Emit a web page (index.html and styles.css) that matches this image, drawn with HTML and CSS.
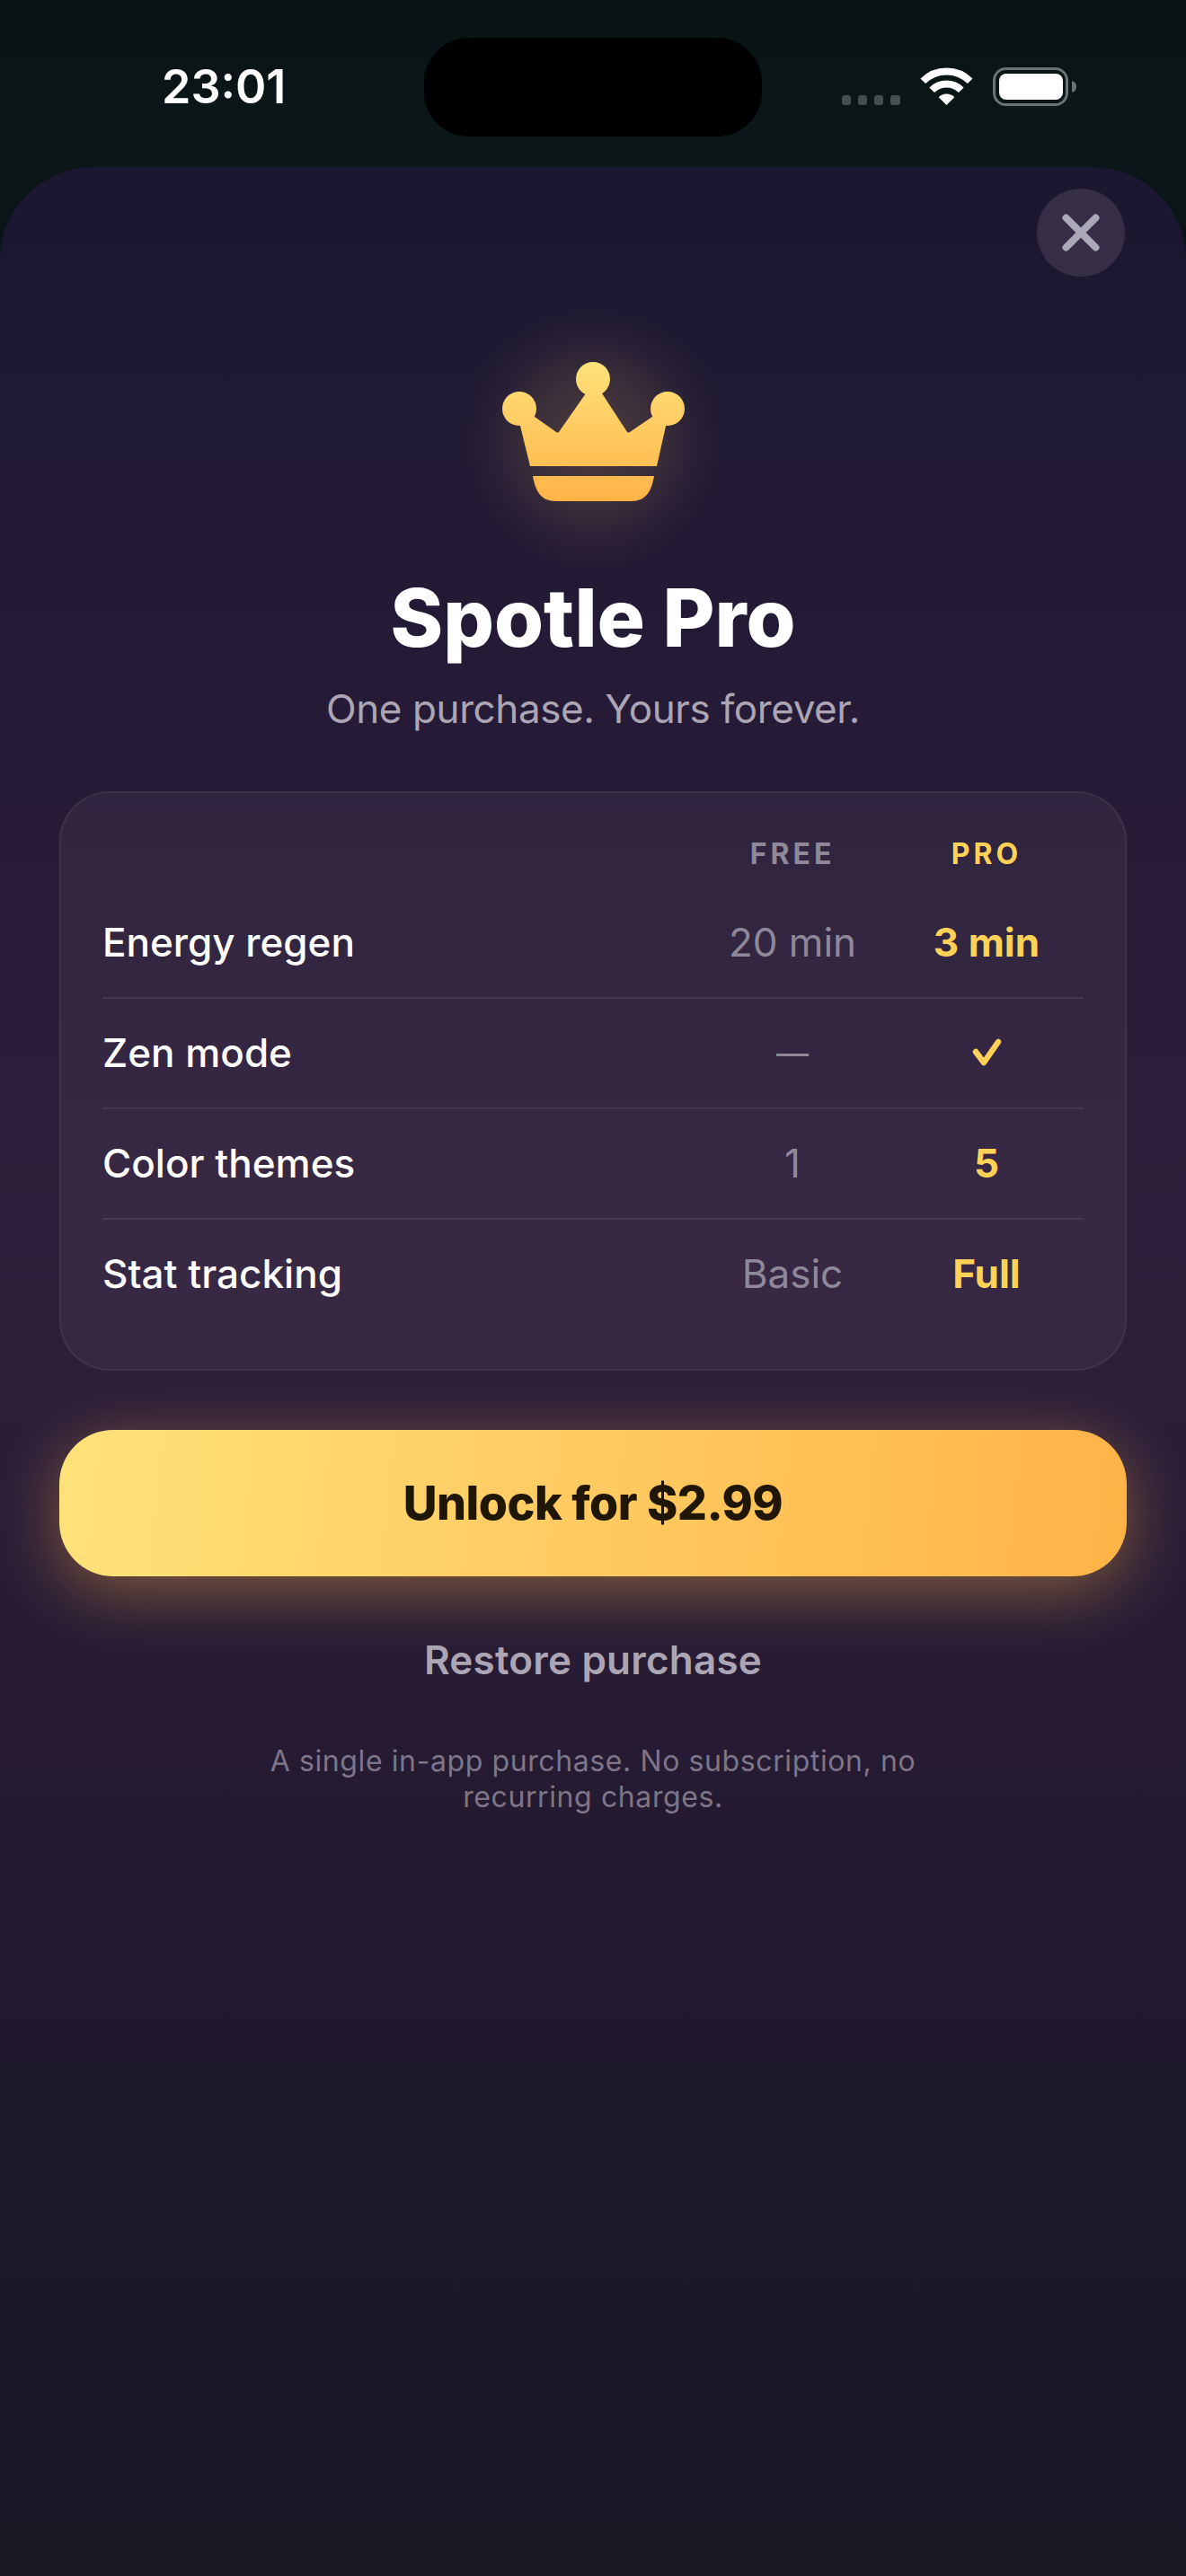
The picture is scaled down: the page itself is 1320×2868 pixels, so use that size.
FILE: index.html
```html
<!DOCTYPE html>
<html lang="en">
<head>
  <meta charset="UTF-8" />
  <meta name="viewport" content="width=device-width, initial-scale=1.0" />
  <title>Spotle Pro</title>
  <link rel="stylesheet" href="styles.css">
</head>
<body>

  <div class="statusbar">
    <div class="time">23:01</div>
    <div class="island"></div>
    <svg class="status-icons" viewBox="930 72 270 50">
      <!-- signal dots -->
      <rect x="937" y="106" width="10" height="11" rx="3" fill="#454d50" />
      <rect x="955" y="106" width="10" height="11" rx="3" fill="#454d50" />
      <rect x="973" y="106" width="10" height="11" rx="3" fill="#454d50" />
      <rect x="991" y="106" width="11" height="11" rx="3" fill="#454d50" />
      <!-- wifi -->
      <path d="M1027.3 90.3A37 37 0 0 1 1079.7 90.3" fill="none" stroke="#fff" stroke-width="8" />
      <path d="M1037.2 100.3A23 23 0 0 1 1069.8 100.3" fill="none" stroke="#fff" stroke-width="8" />
      <path d="M1053.5 117L1044.7 108.2A12.5 12.5 0 0 1 1062.3 108.2Z" fill="#fff" />
      <!-- battery -->
      <rect x="1106.5" y="76.5" width="81" height="40" rx="13" fill="none" stroke="#6c7173" stroke-width="3" />
      <rect x="1112" y="82" width="71" height="29" rx="8" fill="#fff" />
      <path d="M1193 90C1196.5 91 1198 93 1198 96.500C1198 100 1196.5 102 1193 103Z" fill="#6c7173" />
    </svg>
  </div>

  <div class="sheet">
    <button class="close-btn">
      <svg viewBox="0 0 42 42" class="close-icon">
        <path d="M4.5 4.500L37.5 37.500M37.5 4.500L4.500 37.500" fill="none" stroke="#aba8b8" stroke-width="8" stroke-linecap="round" />
      </svg>
    </button>

    <div class="crown">
      <svg viewBox="500 340 320 300" class="crown-icon">
        <defs>
          <linearGradient id="gold" gradientUnits="userSpaceOnUse" x1="660" y1="403" x2="660" y2="558">
            <stop offset="0" stop-color="#ffe27a" />
            <stop offset="1" stop-color="#ffb347" />
          </linearGradient>
        </defs>
        <circle cx="660" cy="422" r="19" fill="url(#gold)" />
        <circle cx="578" cy="455" r="19" fill="url(#gold)" />
        <circle cx="743" cy="455" r="19" fill="url(#gold)" />
        <path d="M590 519L578 470L595 464L619 481Q621 482 622 481L652 438L670 438L698 481Q699 482 701 481L726 464L742 470L731 519Z" fill="url(#gold)" />
        <path d="M593 530H728C725 546 720 558 702 558H619C601 558 596 546 593 530Z" fill="url(#gold)" />
      </svg>
    </div>

    <h1 class="title">Spotle Pro</h1>
    <p class="subtitle">One purchase. Yours forever.</p>

    <div class="compare">
      <div class="compare-head">
        <span></span>
        <span class="head-free">FREE</span>
        <span class="head-pro">PRO</span>
      </div>
      <div class="compare-row">
        <span class="feature">Energy regen</span>
        <span class="free">20 min</span>
        <span class="pro">3 min</span>
      </div>
      <div class="compare-row">
        <span class="feature">Zen mode</span>
        <span class="free dash">—</span>
        <span class="pro">
          <svg viewBox="0 0 36 35" class="check">
            <path d="M6 17L15 29L31 6" fill="none" stroke="#ffd257" stroke-width="6.500" stroke-linecap="round" stroke-linejoin="round" />
          </svg>
        </span>
      </div>
      <div class="compare-row">
        <span class="feature">Color themes</span>
        <span class="free">1</span>
        <span class="pro">5</span>
      </div>
      <div class="compare-row">
        <span class="feature">Stat tracking</span>
        <span class="free">Basic</span>
        <span class="pro">Full</span>
      </div>
    </div>

    <button class="unlock-btn">Unlock for $2.99</button>
    <div class="restore">Restore purchase</div>
    <p class="fineprint">A single in-app purchase. No subscription, no recurring charges.</p>
  </div>

</body>
</html>
```

FILE: styles.css
```css
body {
  font-family: 'Inter', sans-serif;
  background: #0b1518;
  color: #fff;
  margin: 0;
  padding: 0;
  width: 1320px;
  height: 2868px;
  overflow: hidden;
}

.statusbar {
  height: 186px;
  display: grid;
  grid-template-columns: 472px 376px 1fr;
  background: linear-gradient(to bottom, #091316, #0c171a);
}

.time {
  padding-left: 180px;
  padding-top: 64px;
  font-size: 52px;
  line-height: 66px;
  font-weight: 600;
}

.island {
  height: 110px;
  margin-top: 42px;
  background: #000;
  border-radius: 50px;
}

.status-icons {
  display: block;
  width: 270px;
  height: 50px;
  margin-top: 72px;
  margin-left: 82px;
}

.sheet {
  position: relative;
  height: 2682px;
  box-sizing: border-box;
  padding: 154px 66px 0;
  border-radius: 104px 104px 0 0;
  background: linear-gradient(to bottom, #1b1731 0%, #2f1f3c 45%, #231a30 70%, #181825 100%);
  display: flex;
  flex-direction: column;
  align-items: center;
}

.close-btn {
  position: absolute;
  top: 24px;
  right: 68px;
  width: 98px;
  height: 98px;
  padding: 0;
  border: none;
  border-radius: 50%;
  background: #352e46;
  display: flex;
  align-items: center;
  justify-content: center;
}

.close-icon {
  width: 42px;
  height: 42px;
}

.crown {
  width: 320px;
  height: 298px;
  background: radial-gradient(circle at 50% 50%, rgba(255, 200, 100, 0.2) 0%, rgba(255, 200, 100, 0.13) 30%, rgba(255, 200, 100, 0.04) 52%, rgba(255, 200, 100, 0) 68%);
}

.crown-icon {
  display: block;
  width: 320px;
  height: 300px;
}

.title {
  margin: 0;
  font-size: 89px;
  line-height: 100px;
  font-weight: 800;
}

.subtitle {
  margin: 24px 0 0;
  font-size: 44px;
  line-height: 54px;
  letter-spacing: -0.4px;
  color: #aba5b4;
}

.compare {
  width: 100%;
  box-sizing: border-box;
  margin-top: 65px;
  padding: 46px 46px 43px;
  border: 2px solid rgba(255, 255, 255, 0.06);
  border-radius: 56px;
  background: rgba(255, 255, 255, 0.045);
}

.compare-head,
.compare-row {
  display: grid;
  grid-template-columns: 1fr 216px 216px;
  align-items: center;
  text-align: center;
}

.compare-head {
  height: 42px;
  margin-bottom: 18px;
  font-size: 32px;
  font-weight: 700;
  letter-spacing: 4px;
}

.head-free {
  color: #8e8899;
}

.head-pro {
  color: #ffd257;
}

.compare-row {
  height: 123px;
  padding-bottom: 2px;
  font-size: 44px;
  border-bottom: 2px solid rgba(255, 255, 255, 0.08);
  box-sizing: border-box;
}

.compare-row:last-child {
  border-bottom-color: transparent;
}

.feature {
  text-align: left;
  font-weight: 500;
}

.free {
  color: #8e8899;
}

.dash {
  font-size: 36px;
  padding-top: 3px;
}

.pro {
  color: #ffd257;
  font-weight: 700;
}

.check {
  display: block;
  width: 36px;
  height: 35px;
  margin: 0 auto;
}

.unlock-btn {
  width: 100%;
  height: 163px;
  margin-top: 66px;
  border: none;
  border-radius: 60px;
  font-family: inherit;
  font-size: 52px;
  font-weight: 800;
  letter-spacing: -0.5px;
  color: #1f1704;
  background: linear-gradient(96deg, #ffe27a, #ffb347);
  box-shadow: 0 16px 72px rgba(255, 179, 71, 0.42);
}

.restore {
  margin-top: 66px;
  font-size: 44px;
  line-height: 54px;
  letter-spacing: 0.2px;
  font-weight: 600;
  color: #aba5b4;
}

.fineprint {
  width: 780px;
  margin: 66px 0 0;
  text-align: center;
  font-size: 32px;
  line-height: 40px;
  letter-spacing: 0.6px;
  color: #7d7688;
}
```
